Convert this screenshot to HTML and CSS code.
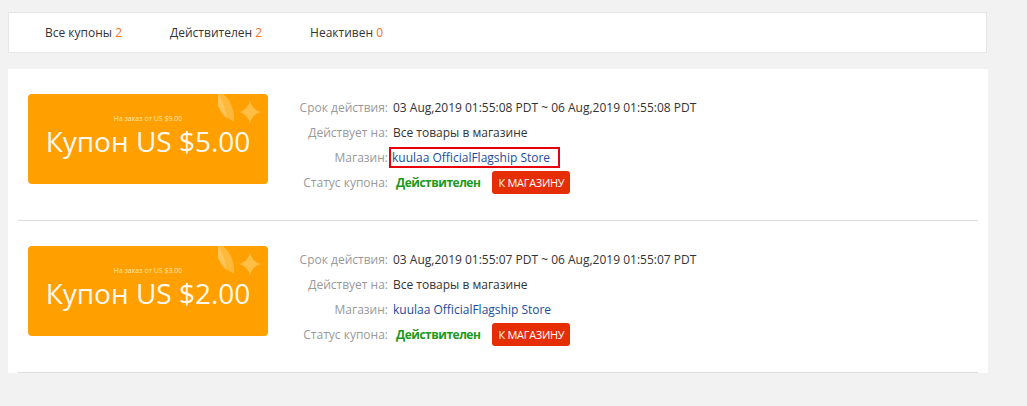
FILE: index.html
```html
<html>
    <head>
        <meta charset="utf-8">
        <link rel="stylesheet" href="styles.css">
        <title>Мои купоны</title>
    </head>
    <body>
        <div id="tabs">
            <span class="tab">Все купоны <em>2</em></span>
            <span class="tab">Действителен <em>2</em></span>
            <span class="tab">Неактивен <em>0</em></span>
        </div>

        <div id="list">
            <div class="item">
                <div class="coupon">
                    <svg class="deco" width="50" height="34" viewBox="0 0 50 34">
                        <path d="M5 0 H10 Q22 10 21 28 Q10 22 5 12 Z" fill="#ffc14d" opacity="0.75"/>
                        <path d="M5 0 V12 Q8 20 14 25 Q13 12 5 0 Z" fill="#ffd27a" opacity="0.5"/>
                        <path d="M37 6 Q39 16 48 18 Q39 20 37 30 Q35 20 26 18 Q35 16 37 6 Z" fill="#ffc14d" opacity="0.9"/>
                    </svg>
                    <div class="min">На заказ от US $9.00</div>
                    <div class="value">Купон US $5.00</div>
                </div>
                <div class="info">
                    <span class="lbl">Срок действия:</span><span>03 Aug,2019 01:55:08 PDT ~ 06 Aug,2019 01:55:08 PDT</span>
                    <span class="lbl">Действует на:</span><span>Все товары в магазине</span>
                    <span class="lbl">Магазин:</span><span><a class="store marked" href="#">kuulaa OfficialFlagship Store</a></span>
                    <span class="lbl">Статус купона:</span><span><b class="ok">Действителен</b><a class="btn" href="#">К МАГАЗИНУ</a></span>
                </div>
            </div>

            <div class="item">
                <div class="coupon">
                    <svg class="deco" width="50" height="34" viewBox="0 0 50 34">
                        <path d="M5 0 H10 Q22 10 21 28 Q10 22 5 12 Z" fill="#ffc14d" opacity="0.75"/>
                        <path d="M5 0 V12 Q8 20 14 25 Q13 12 5 0 Z" fill="#ffd27a" opacity="0.5"/>
                        <path d="M37 6 Q39 16 48 18 Q39 20 37 30 Q35 20 26 18 Q35 16 37 6 Z" fill="#ffc14d" opacity="0.9"/>
                    </svg>
                    <div class="min">На заказ от US $3.00</div>
                    <div class="value">Купон US $2.00</div>
                </div>
                <div class="info">
                    <span class="lbl">Срок действия:</span><span>03 Aug,2019 01:55:07 PDT ~ 06 Aug,2019 01:55:07 PDT</span>
                    <span class="lbl">Действует на:</span><span>Все товары в магазине</span>
                    <span class="lbl">Магазин:</span><span><a class="store" href="#">kuulaa OfficialFlagship Store</a></span>
                    <span class="lbl">Статус купона:</span><span><b class="ok">Действителен</b><a class="btn" href="#">К МАГАЗИНУ</a></span>
                </div>
            </div>
        </div>
    </body>
</html>
```

FILE: styles.css
```css
body {
    margin: 12px 0 0 8px;
    background: #f2f2f2;
    font-family: "Open Sans", "Liberation Sans", sans-serif;
    font-size: 12px;
    color: #333;
}
#tabs {
    width: 979px;
    height: 41px;
    box-sizing: border-box;
    background: #fff;
    border: 1px solid #e6e6e6;
    display: flex;
    align-items: center;
    padding-left: 12px;
}
#tabs .tab {
    padding: 0 24px;
}
#tabs em {
    font-style: normal;
    color: #f57224;
}
#list {
    width: 980px;
    margin-top: 16px;
    background: #fff;
}
.item {
    margin: 0 10px;
    padding: 25px 10px 25px;
    border-bottom: 1px solid #ddd;
    display: flex;
}
.coupon {
    position: relative;
    width: 240px;
    height: 90px;
    background: #ff9f00;
    border-radius: 4px;
    color: #fff;
    display: flex;
    flex-direction: column;
    align-items: center;
    justify-content: center;
    overflow: hidden;
}
.deco {
    position: absolute;
    top: 0;
    right: 5px;
}
.min {
    font-size: 7px;
    color: #ffe6b0;
    margin-top: -6px;
}
.value {
    font-size: 28px;
    line-height: 36px;
    color: #fffaf0;
}
.info {
    margin-left: 30px;
    margin-top: 1px;
    display: grid;
    grid-template-columns: 90px auto;
    column-gap: 5px;
    grid-auto-rows: 25px;
    align-items: center;
    align-content: start;
}
.lbl {
    color: #999;
    text-align: right;
}
.store {
    color: #1a4d9c;
    text-decoration: none;
}
.marked {
    display: inline-block;
    line-height: 17px;
    padding: 0 8px 0 1px;
    margin-left: -2px;
    outline: 2px solid #e8000b;
}
.ok {
    color: #1b9a1b;
    margin-left: 3px;
    letter-spacing: -0.5px;
}
.btn {
    display: inline-block;
    margin-left: 12px;
    width: 78px;
    height: 23px;
    line-height: 23px;
    text-align: center;
    background: #e62e04;
    color: #fff;
    font-size: 11px;
    letter-spacing: -0.3px;
    border-radius: 3px;
    text-decoration: none;
}
```
